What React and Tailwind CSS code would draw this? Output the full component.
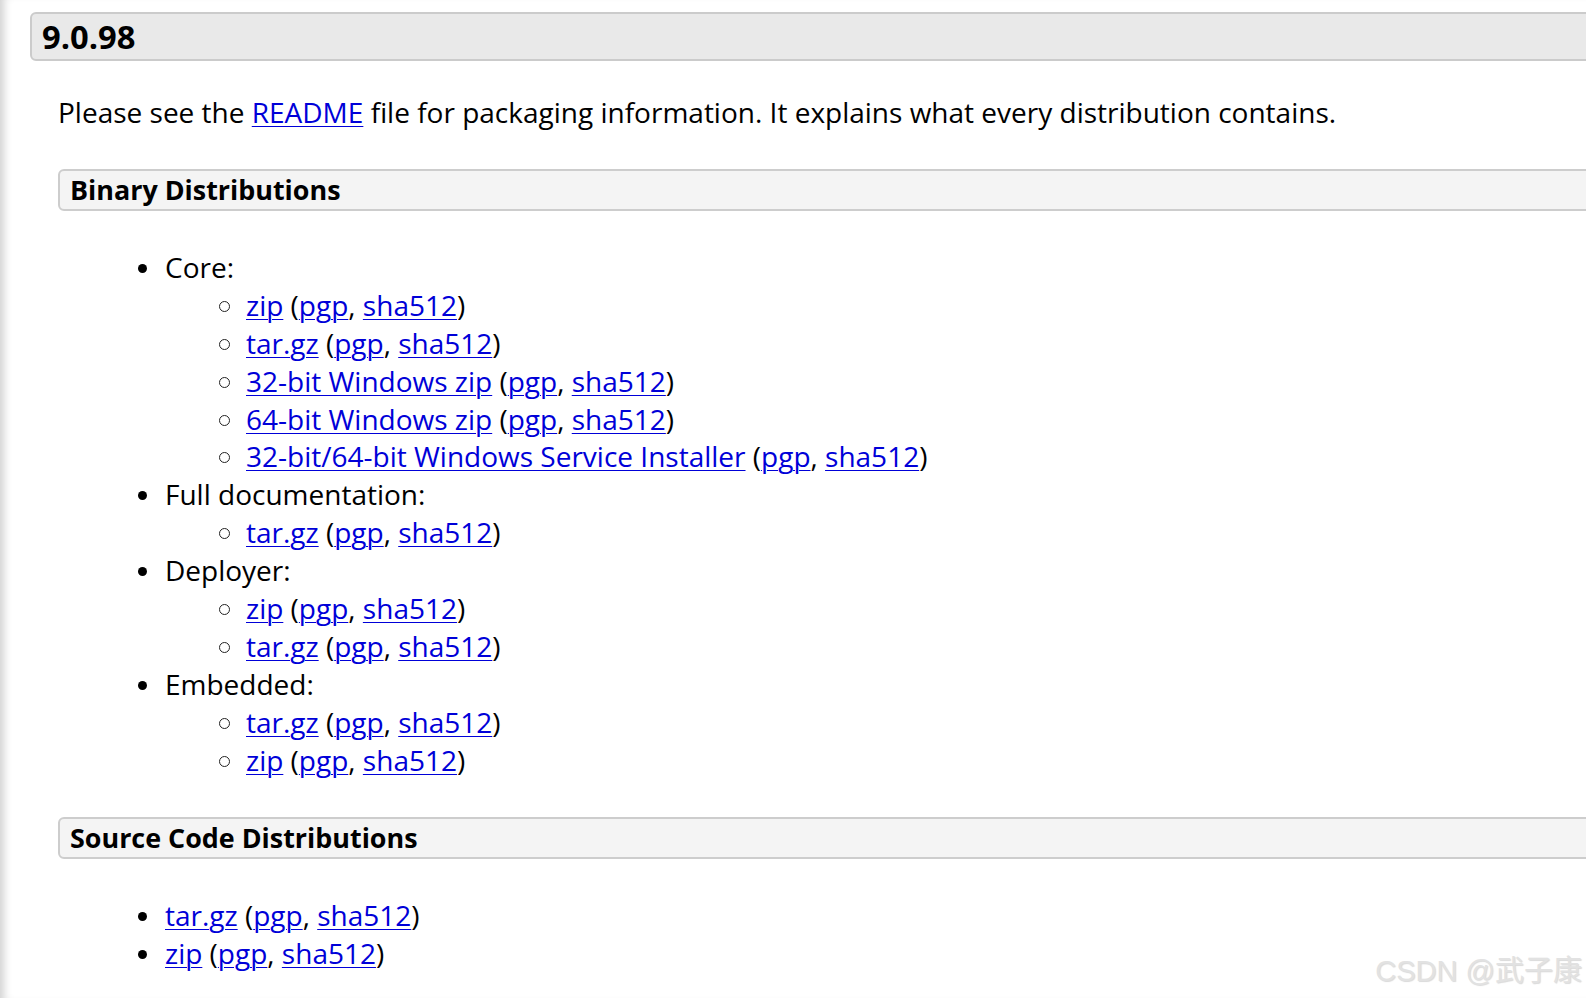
import React from 'react';

const A = ({ children }) => (
  <a href="#" className="text-[#0000d8] underline decoration-1 underline-offset-[3px]">
    {children}
  </a>
);

const Sig = () => (
  <>
    {' ('}
    <A>pgp</A>, <A>sha512</A>)
  </>
);

const Disc = () => <span className="mt-[15px] h-[9px] w-[9px] shrink-0 rounded-full bg-black" />;
const Circle = () => (
  <span className="mt-[14px] h-[11px] w-[11px] shrink-0 rounded-full border-[1.5px] border-[#222]" />
);

const Sub = ({ label }) => (
  <li className="flex items-start gap-[16px] pl-[81px]">
    <Circle />
    <span>
      <A>{label}</A>
      <Sig />
    </span>
  </li>
);

const Group = ({ title, items }) => (
  <li>
    <div className="flex items-start gap-[18px]">
      <Disc />
      <span>{title}</span>
    </div>
    <ul>
      {items.map((it, i) => (
        <Sub key={i} label={it} />
      ))}
    </ul>
  </li>
);

const H4 = ({ children }) => (
  <h4 className="-mr-[30px] flex h-[42px] items-center rounded-[6px] border-2 border-[#cdcdcd] bg-[#f4f4f4] px-[10px] text-[26.9px] font-bold text-black">
    {children}
  </h4>
);

export default function App() {
  return (
    <div className="relative min-h-screen overflow-hidden bg-white pl-[30px] pt-[12px] font-['Open_Sans',sans-serif] text-[28px] leading-[37.9px] text-black shadow-[inset_10px_0_8px_-6px_rgba(0,0,0,0.18)]">
      <h3 className="-mr-[30px] flex h-[49px] items-center rounded-[6px] border-2 border-[#cbcbcb] bg-[#e9e9e9] px-[10px] pt-[1px] text-[32.7px] font-bold">
        9.0.98
      </h3>

      <div className="pl-[28px]">
        <p className="mt-[33px]">
          Please see the <A>README</A> file for packaging information. It explains what every distribution contains.
        </p>

        <div className="mt-[37px]">
          <H4>Binary Distributions</H4>
        </div>

        <ul className="mt-[38px] pl-[80px]">
          <Group
            title="Core:"
            items={['zip', 'tar.gz', '32-bit Windows zip', '64-bit Windows zip', '32-bit/64-bit Windows Service Installer']}
          />
          <Group title="Full documentation:" items={['tar.gz']} />
          <Group title="Deployer:" items={['zip', 'tar.gz']} />
          <Group title="Embedded:" items={['tar.gz', 'zip']} />
        </ul>

        <div className="mt-[37px]">
          <H4>Source Code Distributions</H4>
        </div>

        <ul className="mt-[38px] pl-[80px]">
          {['tar.gz', 'zip'].map((l) => (
            <li key={l} className="flex items-start gap-[18px]">
              <Disc />
              <span>
                <A>{l}</A>
                <Sig />
              </span>
            </li>
          ))}
        </ul>
      </div>

      <div className="absolute bottom-[12px] right-[4px] font-['Liberation_Sans','Noto_Sans_CJK_SC',sans-serif] text-[29px] font-normal leading-none text-[#e2e2e2] [text-shadow:1px_1px_1px_rgba(0,0,0,0.15)]">
        CSDN @武子康
      </div>
    </div>
  );
}
